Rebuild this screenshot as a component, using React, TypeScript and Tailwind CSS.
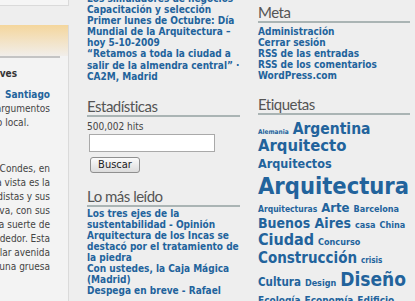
import React from "react";

const LINK = "text-[#22639c]";

function Heading({ children }: { children: React.ReactNode }) {
  return (
    <div className="h-[20px] border-b-2 border-[#aab4b4] font-['Lato',sans-serif] text-[15px] leading-[18px] tracking-[-0.5px] text-[#555555]">
      {children}
    </div>
  );
}

function LeftLine({ text, pr = 0, bold = false, blue = false, mt = 0 }: { text: string; pr?: number; bold?: boolean; blue?: boolean; mt?: number }) {
  return (
    <div className="flex justify-end h-[14px] leading-[14px] whitespace-nowrap" style={{ paddingRight: pr, marginTop: mt }}>
      <span className={(bold ? "font-bold " : "") + (blue ? LINK : bold ? "text-[#333333]" : "text-[#444444]")}>{text}</span>
    </div>
  );
}

type Tag = [string, number];

function TagRow({ tags, h }: { tags: Tag[]; h: number }) {
  return (
    <div className="flex items-baseline gap-x-[4px] whitespace-nowrap leading-none" style={{ height: h }}>
      {tags.map(([t, s]) => (
        <span key={t} style={{ fontSize: s }} className={LINK}>
          {t}
        </span>
      ))}
    </div>
  );
}

export default function App() {
  const font = "font-['DejaVu_Sans_Condensed','DejaVu_Sans',sans-serif] font-stretch-condensed";
  return (
    <div className={"w-[415px] h-[301px] overflow-hidden bg-[#eeeeee] flex " + font}>
      {/* left column */}
      <div className="w-[69px] shrink-0 flex flex-col overflow-hidden">
        <div className="h-[6px] shrink-0 bg-[#f5f5f5] border-b border-r border-[#dadada]" />
        <div className="h-[19px] shrink-0" />
        <div className="flex-1 bg-[#f3f3f3] border-r border-[#dadada] flex flex-col text-[10px]">
          <div className="h-[31px] shrink-0 bg-gradient-to-b from-[#f4d69c] to-[#f1eeea]" />
          <div className="h-[2px] w-[60px] bg-[#c4c4c4]" />
          <div className="pr-[18px] pt-[9px]">
            <LeftLine text="Jueves" pr={33} bold />
            <LeftLine text="Santiago" bold blue mt={7} />
            <LeftLine text="con los argumentos" />
            <LeftLine text="de lo local." pr={21} />
            <LeftLine text="de Las Condes, en" mt={32} />
            <LeftLine text="primera vista es la" />
            <LeftLine text="los periodistas y sus" />
            <LeftLine text="la nueva, con sus" />
            <LeftLine text="en una suerte de" />
            <LeftLine text="su alrededor.  Esta" />
            <LeftLine text="la singular avenida" />
            <LeftLine text="con una gruesa" />
          </div>
        </div>
      </div>

      {/* middle column */}
      <div className="ml-[18px] w-[153px] shrink-0 flex flex-col">
        <div className={"-mt-[7px] font-bold text-[10px] leading-[11.1px] " + LINK}>
          <div>Los simuladores de negocios</div>
          <div>Capacitación y selección</div>
          <div>Primer lunes de Octubre: Día</div>
          <div>Mundial de la Arquitectura –</div>
          <div>hoy 5-10-2009</div>
          <div>“Retamos a toda la ciudad a</div>
          <div>salir de la almendra central” ·</div>
          <div>CA2M, Madrid</div>
        </div>
        <div className="mt-[15px]">
          <Heading>Estadísticas</Heading>
        </div>
        <div className="mt-[3px] text-[10px] leading-[13px] text-[#444444]">500,002 hits</div>
        <div className="mt-[1px] ml-[2px] w-[126px] h-[18px] bg-white border border-[#a9a9a9]" />
        <div className="mt-[5px] ml-[3px] w-[50px] h-[16px] rounded-[3px] border border-[#8f8f8f] bg-gradient-to-b from-[#fbfbfb] to-[#dcdcdc] flex items-center justify-center text-[11px] text-[#222222]">
          Buscar
        </div>
        <div className="mt-[14px]">
          <Heading>Lo más leído</Heading>
        </div>
        <div className={"mt-[1px] font-bold text-[10px] leading-[11.1px] " + LINK}>
          <div>Los tres ejes de la</div>
          <div>sustentabilidad - Opinión</div>
          <div>Arquitectura de los Incas se</div>
          <div>destacó por el tratamiento de</div>
          <div>la piedra</div>
          <div>Con ustedes, la Caja Mágica</div>
          <div>(Madrid)</div>
          <div>Despega en breve - Rafael</div>
        </div>
      </div>

      {/* right column */}
      <div className="ml-[18px] w-[152px] shrink-0 flex flex-col">
        <div className="mt-[3px]">
          <Heading>Meta</Heading>
        </div>
        <div className={"mt-[3px] font-bold text-[10px] leading-[11.1px] " + LINK}>
          <div>Administración</div>
          <div>Cerrar sesión</div>
          <div>RSS de las entradas</div>
          <div>RSS de los comentarios</div>
          <div>WordPress.com</div>
        </div>
        <div className="mt-[14px]">
          <Heading>Etiquetas</Heading>
        </div>
        <div className="mt-[7px] font-bold">
          <TagRow h={16} tags={[["Alemania", 6.5], ["Argentina", 15.5]]} />
          <TagRow h={20} tags={[["Arquitecto", 16.5]]} />
          <TagRow h={17} tags={[["Arquitectos", 12.5]]} />
          <TagRow h={26} tags={[["Arquitectura", 23.5]]} />
          <TagRow h={14.5} tags={[["Arquitecturas", 8.5], ["Arte", 13], ["Barcelona", 9]]} />
          <TagRow h={16.5} tags={[["Buenos Aires", 14], ["casa", 9], ["China", 9]]} />
          <TagRow h={19} tags={[["Ciudad", 16], ["Concurso", 9]]} />
          <TagRow h={19} tags={[["Construcción", 15], ["crisis", 8]]} />
          <TagRow h={26} tags={[["Cultura", 11.5], ["Design", 9], ["Diseño", 19]]} />
          <TagRow h={14} tags={[["Ecología", 10], ["Economía", 10], ["Edificio", 10]]} />
        </div>
      </div>
    </div>
  );
}
